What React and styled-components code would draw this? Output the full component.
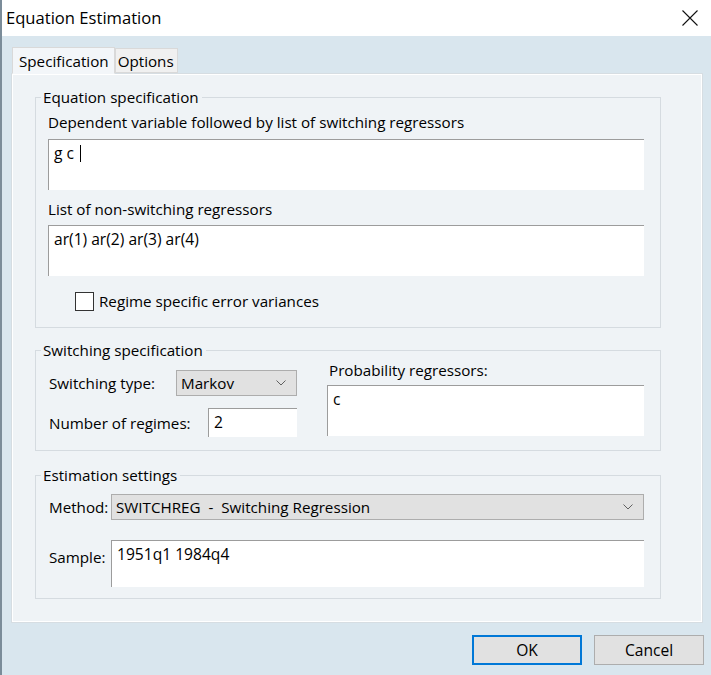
import React from 'react';
import styled, { createGlobalStyle } from 'styled-components';

const GlobalStyle = createGlobalStyle`
  html, body {
    margin: 0;
    padding: 0;
    background: #d9e6ee;
  }
  body {
    font-family: "Open Sans", "Noto Sans", sans-serif;
    font-size: 15.2px;
    color: #000;
  }
`;

const Window = styled.div`
  width: 711px;
  height: 675px;
  box-sizing: border-box;
  border-left: 2px solid #7b8c99;
  display: flex;
  flex-direction: column;
  background: #d9e6ee;
  overflow: hidden;
`;

const TitleBar = styled.div`
  height: 36px;
  flex: none;
  background: #fff;
  display: flex;
  align-items: center;
  justify-content: space-between;
  padding: 0 13px 0 4px;
`;

const Title = styled.div`
  font-size: 16.6px;
  line-height: 20px;
`;

const CloseButton = styled.div`
  width: 16px;
  height: 16px;
  display: flex;
`;

const Body = styled.div`
  flex: 1;
  display: flex;
  flex-direction: column;
  padding: 10px 7px 0 9px;
`;

const TabStrip = styled.div`
  display: flex;
  align-items: flex-end;
  height: 27px;
  margin-left: 1px;
  position: relative;
  z-index: 1;
`;

const Tab = styled.div`
  box-sizing: border-box;
  height: ${(p) => (p.$active ? '27px' : '25px')};
  padding: 0 ${(p) => (p.$active ? '5px 0 6px' : '3px 0 2px')};
  display: flex;
  align-items: center;
  background: ${(p) => (p.$active ? '#f3f6f9' : '#f0f0f0')};
  border: 1px solid #d9d9d9;
  border-bottom: ${(p) => (p.$active ? '1px solid #f3f6f9' : '1px solid #d9d9d9')};
  margin-bottom: ${(p) => (p.$active ? '-1px' : '0')};
  line-height: 20px;
`;

const Panel = styled.div`
  box-sizing: border-box;
  width: 692px;
  height: 550px;
  background: #eff3f6;
  border: 1px solid #d6dde2;
  box-shadow: inset 1px 1px 0 #fff, inset -1px -1px 0 #fff;
  padding: 13px 0 0 23px;
  display: flex;
  flex-direction: column;
`;

const Group = styled.fieldset`
  box-sizing: border-box;
  width: 626px;
  margin: ${(p) => p.$top || 0}px 0 0 0;
  padding: 0;
  border: 1px solid #d5dbe0;
  min-width: 0;
`;

const Legend = styled.legend`
  margin-left: 5px;
  padding: 0 3px 0 2px;
  line-height: 20px;
`;

const GroupBody = styled.div`
  padding: ${(p) => p.$pad || '0 15px 16px 12px'};
`;

const Label = styled.div`
  line-height: 20px;
  margin-top: ${(p) => p.$top || 0}px;
  margin-left: ${(p) => p.$left || 0}px;
  white-space: nowrap;
`;

const TextBox = styled.div`
  box-sizing: border-box;
  background: #fff;
  border-top: 1px solid #9c9c9c;
  border-left: 1px solid #9c9c9c;
  width: ${(p) => p.$w || 596}px;
  height: ${(p) => p.$h || 51}px;
  margin-top: ${(p) => p.$top || 0}px;
  padding: 3px 0 0 5px;
  font-size: 15.6px;
  line-height: 20px;
  flex: none;
`;

const Caret = styled.span`
  display: inline-block;
  width: 1px;
  height: 17px;
  background: #000;
  vertical-align: -3px;
  margin-left: 6px;
`;

const CheckRow = styled.label`
  display: flex;
  align-items: center;
  gap: 5px;
  margin: 15px 0 0 27px;
  line-height: 20px;
`;

const CheckBox = styled.span`
  box-sizing: border-box;
  width: 19px;
  height: 19px;
  background: #fff;
  border: 1px solid #333;
`;

const SwitchGrid = styled.div`
  display: grid;
  grid-template-columns: 250px 317px;
  column-gap: 29px;
  padding: 0 15px 13px 12px;
`;

const Column = styled.div`
  display: flex;
  flex-direction: column;
`;

const FieldRow = styled.div`
  display: flex;
  align-items: ${(p) => (p.$top ? 'flex-start' : 'center')};
  margin-top: ${(p) => p.$mt || 0}px;
`;

const RowLabel = styled.div`
  width: ${(p) => p.$w}px;
  flex: none;
  line-height: 20px;
  margin-top: ${(p) => p.$top || 0}px;
  padding-left: 1px;
  box-sizing: border-box;
  white-space: nowrap;
`;

const Select = styled.div`
  box-sizing: border-box;
  width: ${(p) => p.$w}px;
  height: 26px;
  background: #e1e1e1;
  border: 1px solid #adadad;
  display: flex;
  align-items: center;
  justify-content: space-between;
  padding: 0 10px 0 4px;
  line-height: 20px;
  white-space: pre;
`;

const ButtonRow = styled.div`
  display: flex;
  justify-content: flex-end;
  gap: 12px;
  margin-top: 12px;
`;

const Button = styled.div`
  box-sizing: border-box;
  width: 110px;
  height: 30px;
  background: #e1e1e1;
  border: ${(p) => (p.$primary ? '2px solid #0078d7' : '1px solid #adadad')};
  display: flex;
  align-items: center;
  justify-content: center;
  font-size: 15.6px;
`;

const Chevron = () => (
  <svg width="10" height="6" viewBox="0 0 10 6">
    <polyline points="0.5,0.5 5,5 9.5,0.5" fill="none" stroke="#606060" strokeWidth="1" />
  </svg>
);

const CloseIcon = () => (
  <svg width="16" height="16" viewBox="0 0 16 16">
    <path d="M0.5 0.5 L15.5 15.5 M15.5 0.5 L0.5 15.5" stroke="#111" strokeWidth="1.1" />
  </svg>
);

export default function App() {
  return (
    <>
      <GlobalStyle />
      <Window>
        <TitleBar>
          <Title>Equation Estimation</Title>
          <CloseButton>
            <CloseIcon />
          </CloseButton>
        </TitleBar>
        <Body>
          <TabStrip>
            <Tab $active>Specification</Tab>
            <Tab>Options</Tab>
          </TabStrip>
          <Panel>
            <Group>
              <Legend>Equation specification</Legend>
              <GroupBody>
                <Label $top={5}>Dependent variable followed by list of switching regressors</Label>
                <TextBox $top={7}>
                  g c<Caret />
                </TextBox>
                <Label $top={9}>List of non-switching regressors</Label>
                <TextBox $top={6}>ar(1) ar(2) ar(3) ar(4)</TextBox>
                <CheckRow>
                  <CheckBox />
                  Regime specific error variances
                </CheckRow>
              </GroupBody>
            </Group>

            <Group $top={12}>
              <Legend>Switching specification</Legend>
              <SwitchGrid>
                <Column>
                  <FieldRow $mt={10}>
                    <RowLabel $w={128}>Switching type:</RowLabel>
                    <Select $w={121}>
                      Markov
                      <Chevron />
                    </Select>
                  </FieldRow>
                  <FieldRow $mt={12}>
                    <RowLabel $w={160}>Number of regimes:</RowLabel>
                    <TextBox $w={89} $h={29}>2</TextBox>
                  </FieldRow>
                </Column>
                <Column>
                  <Label $top={0} $left={2}>Probability regressors:</Label>
                  <TextBox $w={317} $top={5}>c</TextBox>
                </Column>
              </SwitchGrid>
            </Group>

            <Group $top={14}>
              <Legend>Estimation settings</Legend>
              <GroupBody $pad="0 15px 11px 12px">
                <FieldRow $mt={9}>
                  <RowLabel $w={63}>Method:</RowLabel>
                  <Select $w={533}>
                    SWITCHREG  -  Switching Regression
                    <Chevron />
                  </Select>
                </FieldRow>
                <FieldRow $mt={20} $top>
                  <RowLabel $w={63} $top={7}>Sample:</RowLabel>
                  <TextBox $w={533} $h={47}>1951q1 1984q4</TextBox>
                </FieldRow>
              </GroupBody>
            </Group>
          </Panel>
          <ButtonRow>
            <Button $primary>OK</Button>
            <Button>Cancel</Button>
          </ButtonRow>
        </Body>
      </Window>
    </>
  );
}
